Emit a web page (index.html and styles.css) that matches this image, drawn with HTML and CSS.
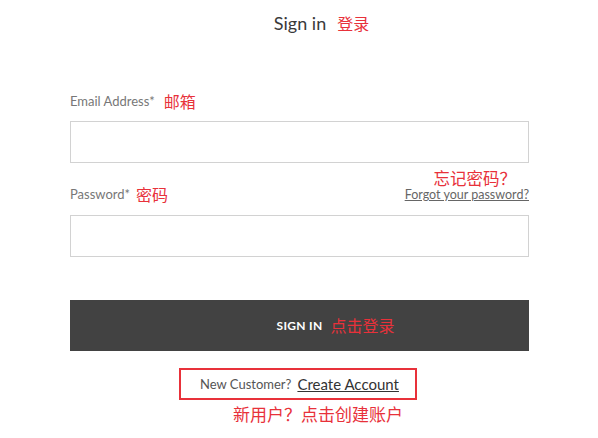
FILE: index.html
```html
<!DOCTYPE html>
<html>
<head>
<meta charset="utf-8">
<link rel="stylesheet" href="styles.css">
</head>
<body>
<div class="page">
  <div class="title-row">
    <span class="title">Sign in<span class="note note-title">登录</span></span>
  </div>

  <div class="label-row email-row">
    <span class="label">Email Address*</span><span class="note note-inline">邮箱</span>
  </div>
  <div class="input"></div>

  <div class="label-row pw-row">
    <div class="pw-left">
      <span class="label">Password*</span><span class="note note-inline note-pw">密码</span>
    </div>
    <div class="pw-right">
      <span class="note note-forgot">忘记密码？</span>
      <a class="forgot">Forgot your password?</a>
    </div>
  </div>
  <div class="input"></div>

  <div class="button">
    <span class="btn-text">SIGN IN<span class="note note-btn">点击登录</span></span>
  </div>

  <div class="new-row">
    <div class="new-box">
      <span class="new-label">New Customer?</span>
      <a class="create">Create Account</a>
    </div>
  </div>
  <div class="note note-bottom">新用户？点击创建账户</div>
</div>
</body>
</html>
```

FILE: styles.css
```css
* { box-sizing: border-box; }
html, body { margin: 0; padding: 0; background: #fff; }
body {
  font-family: Lato, "Noto Sans CJK SC", sans-serif;
  color: #333;
  width: 598px;
  height: 438px;
  overflow: hidden;
}
.page {
  display: flex;
  flex-direction: column;
  padding: 0 69px 0 70px;
}
.note {
  font-family: "Noto Sans CJK SC", sans-serif;
  color: #e8313a;
  font-size: 16px;
  font-weight: 400;
  line-height: 20px;
  letter-spacing: 0;
}
.title-row {
  display: flex;
  justify-content: center;
  margin-top: 11px;
  height: 24px;
}
.title {
  position: relative;
  font-size: 18px;
  line-height: 24px;
  color: #3a3a3a;
  padding-left: 1px;
}
.note-title {
  position: absolute;
  left: 100%;
  top: 2px;
  margin-left: 11px;
  white-space: nowrap;
}
.label-row {
  display: flex;
  align-items: center;
}
.email-row {
  margin-top: 56px;
  height: 20px;
  margin-bottom: 10px;
}
.label {
  font-size: 13px;
  color: #777;
  line-height: 20px;
}
.note-inline {
  margin-left: 9px;
}
.note-pw {
  margin-left: 6px;
}
.input {
  height: 42px;
  border: 1px solid #d2d2d2;
  background: #fff;
}
.pw-row {
  justify-content: space-between;
  align-items: flex-end;
  margin-top: 5px;
  height: 37px;
  margin-bottom: 10px;
}
.pw-left {
  display: flex;
  align-items: center;
  margin-bottom: 1px;
}
.pw-right {
  display: flex;
  flex-direction: column;
  align-items: flex-end;
}
.note-forgot {
  margin-right: 13px;
  line-height: 20px;
  font-size: 16.5px;
}
.forgot {
  font-size: 12.5px;
  line-height: 14px;
  color: #666;
  text-decoration: underline;
  margin-bottom: 3px;
}
.button {
  margin-top: 43px;
  height: 51px;
  background: #424242;
  display: flex;
  justify-content: center;
  align-items: center;
}
.btn-text {
  position: relative;
  color: #fff;
  font-weight: 700;
  font-size: 12px;
  line-height: 16px;
  letter-spacing: 0.3px;
}
.note-btn {
  position: absolute;
  left: 100%;
  top: -3px;
  margin-left: 8px;
  white-space: nowrap;
}
.new-row {
  display: flex;
  justify-content: center;
  margin-top: 17px;
  padding-right: 3px;
}
.new-box {
  width: 238px;
  height: 32px;
  border: 2px solid #e8313a;
  display: flex;
  align-items: center;
  justify-content: center;
  gap: 6px;
  padding-left: 3px;
}
.new-label {
  font-size: 13px;
  color: #555;
}
.create {
  font-size: 15px;
  color: #333;
  text-decoration: underline;
}
.note-bottom {
  margin-left: 163px;
  margin-top: 3px;
  font-size: 17px;
  line-height: 22px;
}
```
